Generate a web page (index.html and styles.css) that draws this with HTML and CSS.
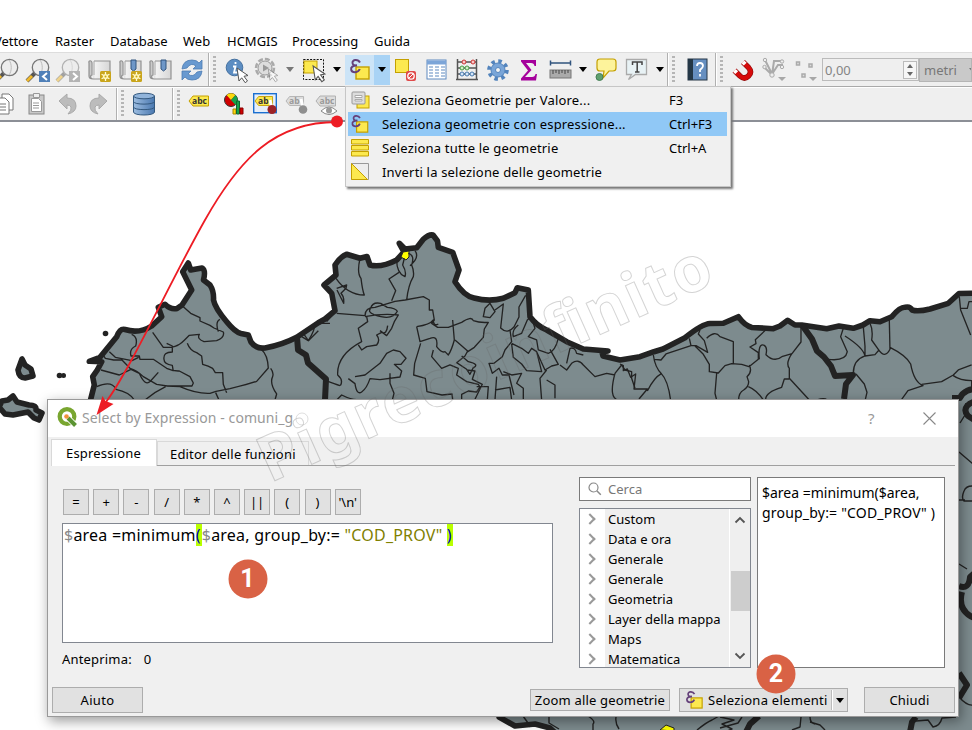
FILE: index.html
```
<!DOCTYPE html>
<html lang="it">
<head>
<meta charset="utf-8">
<title>Select by Expression - comuni_g</title>
<link rel="stylesheet" href="styles.css">
</head>
<body>
<svg width="0" height="0" class="defs">
<defs>
<linearGradient id="paper" x1="0" x2="1"><stop offset="0" stop-color="#bdbdbd"/><stop offset=".3" stop-color="#f2f2f2"/><stop offset="1" stop-color="#d6d6d6"/></linearGradient>
<linearGradient id="dbg" x1="0" x2="1"><stop offset="0" stop-color="#9dbde0"/><stop offset="1" stop-color="#4a78b0"/></linearGradient>
<symbol id="lens" viewBox="0 0 26 26" overflow="visible"><path d="M1 23l9-9" stroke="#555" stroke-width="4"/><path d="M1 23l5-5" stroke="#f0b92c" stroke-width="3"/><circle cx="14.500" cy="9.500" r="8.200" fill="#ededed" stroke="#777" stroke-width="1.300"/><path d="M14 2c3 4 3 11 0 15" fill="none" stroke="#bbb"/></symbol>
<symbol id="scroll" viewBox="0 0 26 26" overflow="visible"><path d="M6 3h16v18H5c-3 0-3-4-1-4V5c0-3-4-3-3 0v13c0 2 2 3 4 3" fill="url(#paper)" stroke="#929292" stroke-width="1.200"/><path d="M6 3v14" stroke="#aaa"/></symbol>
<symbol id="star" viewBox="0 0 11 11" overflow="visible"><rect width="11" height="11" rx="1.500" fill="#c9a51b"/><path d="M5.500 1v9M1.600 3.200l7.800 4.600M9.400 3.200l-7.800 4.600" stroke="#fffbe0" stroke-width="1.300"/><circle cx="5.500" cy="5.500" r="2.600" fill="#fff7b5"/><circle cx="5.500" cy="5.500" r="1" fill="#c9a51b"/></symbol>
<symbol id="pointer" viewBox="0 0 12 15" overflow="visible"><path d="M0 0l11 7.500-4 .8 3.500 4.700-2.300 1.700-3.500-4.900L2 13z" fill="#fff" stroke="#555" stroke-width="1"/></symbol>
<symbol id="eps" viewBox="0 0 20 21" overflow="visible"><rect x="6" y="8" width="13" height="12" fill="#fce94f" stroke="#c4a000" stroke-width="1.400"/><path d="M10 3.500C8-.2 2 .5 2.500 4c.2 2 2 2.800 4.500 2.500C3 6.500 .500 8 1.200 10.800c.7 3.200 7 3.400 8.600-.8" fill="none" stroke="#65417a" stroke-width="2"/></symbol>
<symbol id="label" viewBox="0 0 20 12" overflow="visible"><path d="M0 6l4-5h15.500v10H4z" fill="#fce94f" stroke="#c4a000"/></symbol>
<symbol id="labelg" viewBox="0 0 20 12" overflow="visible"><path d="M0 6l4-5h15.500v10H4z" fill="#ddd" stroke="#b0b0b0"/></symbol>
</defs>
</svg>

<div class="screen">
  <svg class="map" width="972" height="730" viewBox="0 0 972 730">
    <path class="coast" d="M90 402L94.300 385 92.700 376.700 97.300 370 101.700 361.700 89.300 361.300 100 357.300 116.700 336.700Q120 328 125 329.500Q139 334 151.700 326L161.700 316.700 158.300 307.300 165 304.300Q171 310 177 308.500L182 305 191.700 290 182.700 271.700 188.300 263 190.700 270 202 268Q206 270 203.500 280L210 285Q214 291 213.500 300Q215 308 226.700 321.700Q235 332 241 333.500L248.300 335 251 342Q256 349 265 348Q282 345 296.700 337.300L318.300 322.700 325 319 335 310.700 331.700 293.300 324 285 336 275 335 265Q341 256 346.700 254.300L360 258.300 367 256.500 370 265Q381 268 396.700 260L404 252 399.300 243.300 405 249 416.700 247.700 423.300 239.300Q429 234 433 235L437.500 241 438.300 247.300 452.700 252.300 459 270 455 281.700Q464 296 474 298Q489 302 503.300 298.300L515 292.700 517.300 287.700 528.300 290 530 316.700Q537 326 546.700 330L566.700 341.700 583.300 349 608 351 602 352 603 356 620 360 640 356.700 654 351.700 663 349 685 337.700Q702 324 710 323.500L723.300 323.300 738.300 316.700Q745 326 752 327.500L773.300 328.700 780 326 787.700 320.300 795 325 801.700 325 826.700 328.700 839 326 853.300 328.300 863 325 870 320.700 880 321.700 891.700 316.700Q900 307 905 307.300Q910 306 912 310Q918 312 930 309L948.300 303.300 959 293.500 980 293V740H563L550 728 535 724 515 726 499 717V402Z"/>
    <path class="coast" d="M22 359l-4 11q1 8 7 8l8-2-2-7-6-4zM2 401l6-1 5-4 4 6 12 3q8 0 7 5l6 3-3 7-5-2-6-6-15 3-8-1-6-7z"/>
    <g fill="#232323"><circle cx="105.500" cy="333.500" r="2.800"/><circle cx="59.500" cy="375.500" r="2.800"/><circle cx="63.500" cy="375.500" r="2.500"/></g>
    <path class="yel" d="M403 252l6-1v6l-3 3-5-3z"/>
    <path class="yel" d="M660 730l6-5 8 3v3z"/>
    <path class="prov" d="M297 337l1 13 8 5 2 8 18 16-1 21M802 325l10 14 5 12 7 6 7 9 4 10 18-1-7 9-2 15M982 391c-12-5-20 2-22 7h-8M982 401c-15 0-20 8-14 15l8 5M959 586q10 4 11-9l8-7M962 592q-5 18 12 26M959 673l8 12-8 13M759 716l-9 8-4 8M916 717l-4 5-2 10"/>
    <g transform="translate(0 220) scale(.3333)" class="parish">
      <path d="M550 260l22 20 28 13v10l30 13 12 8 28 12q5 16-20 26l-38 3q-22-8-14-22l-30 3-15 15q-15 15-28 18l-12 3h-23l-32-45M655 335q-10-30 5-37M500 370l17 8v18q-28 0-25 22 0 15 25 18l3 18M562 370q8 22 28 28l15 10 3 25q18 5 30 12l8 13h22l2 35 10 25M395 343q20 8 12 35-20 10-14 30h25l2 10h40l40 27q20 9 38 8l32 17 10 19-4 9h-74l-32-5-40-23q-20-20-40-25l-24-25h-25l-25-5-10-16M328 395l18 17 50 10 20-10M303 450l55 15 35-17 25 12q17 40 33 24l24-27M290 500q45-20 58 8 40 8 55 32M435 540q30-25 62-40M500 498l40 2q50 22 90 20l18-6 42-8q60-15 80-22l35-40q-2-40-20-55M812 445q10 12 6 25-10 20 12 52l-5 18M647 518l10 22M905 350l20 12q20-30 20-52h45"/>
    </g>
    <g transform="translate(300 220) scale(.3333)" class="parish">
      <path d="M180 115q-10 45 3 60 5 40 10 50-50 0-85-50M110 205l30-10-2 10-15 15q10 10 8 30l-20-40M110 280l85 7q0-25 30-25l60-18 30-4 55-10 18 10v30h10l5 30-8 10 18 12h32l40-15q30-20 35-5 20 7 45 5l-12 20-3 25-27 30-23 15M290 120q0 40 25 50 5-15-7-35l5-20M325 100q20 5 10 35 8 18 5 35-15 25-20 70M345 92q15 20-15 45M297 157l-30 20 20 35-12 30M212 265q5-20 30-15l20 12q25 2 30 12-15 30-70 10-20-8-10-19M195 290q50-10 100-5l-12 20-8 20-15 22-20-15M200 290l3 15-28 20 10 40q-75 40-72 100 18 15 8 32M175 375l10 15 15-10 30-5q12-15 0-30l15-8q15 8 18-20M10 340l15 22q20-20 30-30M80 305l20-23M0 395l20 20 5 18 55 50q25 10 40 14M110 540l15-15q30 15 48 14M165 470l30-5 45-35 20-30 20-10 20 5 18 20-15 18h-20l22 20-5 18-60 8-30-3q-10 30-25 40-15 10-20-25l-20-15M270 460v30l12 30-5 20M350 320q40-5 50-20 0 20 15 12M350 320l10 45 30-10q25-10 20 25 15 20 25 15l10 10q10-15 18-45l-5-60M362 370l-18 60-3 35 35 10 5 40 45 10 30-3 3 25M400 390l-5 20 30 35 25-10 25 10-5 20 30 20 35 8 5 8-10 15-25-3-20 10v18M465 360l38 33-8 15-25 20 30 20 10 15 10-20q20-10-15-18l-20-17M500 450l25 3-8 25 30 15-10 20-12 25M550 290l5-25 15-15 15 25-15 18zM585 270l25-18-8 72q20 20 40-3l15-30v-30l20-35M655 315q-20 15-15 35l25-10 17-40 10-8M630 330l5 35-20 25-8 20-25 20h-15l10 30 20-15 10 20h20l15 60M610 455l25 10 30-5-15 30 20 15v35M635 370l30 15 20 15 10-15 15 10 15 60-45-3-15-20-25-20-5-40M700 310l5 15-20 25 25 10 5 30 30 10q20-5 30-45M710 395l25 55 20-12 20-5-25-45M740 450l-20 25 5 65M740 480l25 15v40M780 435l20 15 15-20q20-15 35 5l35 35 35-10 25 5M800 430l10-45q15-5 20 15l20 5M945 460q-20 75 10 80M945 460l20-25 10 15 20 5v20l10 30M590 470l-5 70M585 510l45-8 5 38M530 500h35l-3 40M0 350l22-20"/>
    </g>
    <g transform="translate(620 230) scale(.3333)" class="parish">
      <path d="M0 402l10 5v15l12-5 10 25 15-10-5 45h40l-25 30M82 483q20-40 42-52 20 20 28 80M100 375q5 38 25 57M103 388l20 2 15-18 75-25h15l35 20-10-35-18-20 5-12M208 325l5 22M225 348l25 25 18 30v22l27 4 20-22 20-6 30 2 22 7 28-22v-20l-25-17 18-10-2-12 30-28M260 325q25-25 40-5l40 15v65M418 388q-5-50 15-42 10 6 5 28 25 25 50 5l28-8 27-35v-50M516 370q-20 30-8 45v30l60 65M508 447h-15l-8 25q-50 15-48 38M388 405q10 20-7 35l5 15q0 15-15 25-15 8-15 30M385 470q25 10 45 40M290 430l-5 60 5 20M670 295l-8 25 20 45q-5 30-58 23M675 318q55 35 60 60v-30l-5-57M750 280q10 20 5 50l20 28q20 30 35 0l-2-88M700 430q0-40 35-52l30-4 12-14M810 352q50 25 62 50 10 55 37 65-30 10-45 15l-20 28M905 463l60-8 35-20 15-15 40-15M1000 437q20 15 55 15v20M1018 200l4 40 30 75M1022 235h20l5-20h12M708 432l25 30 8 25-5 22M592 510q20-8 30 0"/>
    </g>
    <path class="parish" d="M960 423l5-8 1-12M959 452l14 12M972 486q-6 0-8 5-3 7 0 10h9M959 500h6M959 564l8 5M959 697q8 9 14 8M523 716l5 7 2 4M549 717v6l10 6M588 716q8 5 5 8v6M616 717q-1 6 3 12M697 730q10-8 15-10l7-4M720 717l14 3-12 4 10 5-7 3M720 728l18-5 4-6M792 730l8-3 1-10M810 717q0 6 5 7M810 722l10 3 5 5M916 721l12-1 5 7q7-1 9-9l14-1"/>
  </svg>

  <header class="menubar"><span class="m1">Vettore</span><span class="m2">Raster</span><span class="m3">Database</span><span class="m4">Web</span><span class="m5">HCMGIS</span><span class="m6">Processing</span><span class="m7">Guida</span></header>

  <div class="toolbar row1">
    <div class="group first">
      <svg class="ic"><use href="#lens" width="26" height="26" x="-1"/></svg>
      <svg class="ic"><use href="#lens" width="26" height="26" x="-1"/><rect x="12" y="13" width="11" height="11" fill="#5080b8"/><path d="M20 15l-4 3.500 4 3.500" fill="none" stroke="#fff" stroke-width="2"/></svg>
      <svg class="ic"><use href="#lens" width="26" height="26" x="-1" class="dim"/><rect x="12" y="13" width="11" height="11" fill="#b4b4b4"/><path d="M16 15l4 3.500-4 3.500" fill="none" stroke="#fff" stroke-width="2"/></svg>
      <svg class="ic"><use href="#scroll" width="26" height="26"/><use href="#star" x="12" y="13" width="11" height="11"/></svg>
      <svg class="ic"><use href="#scroll" width="26" height="26"/><path d="M12 2h5v9l-2.500 2L12 11z" fill="#6e97c8" stroke="#31547e"/><use href="#star" x="12" y="13" width="11" height="11"/></svg>
      <svg class="ic"><use href="#scroll" width="26" height="26"/><path d="M12 2h5v9l-2.500 2L12 11z" fill="#6e97c8" stroke="#31547e"/></svg>
      <svg class="ic"><path d="M2 11Q3 2 12 2q5 0 7 3l3-3v9h-9l3-3q-5-4-9 2zM22 13q-1 9-10 9-5 0-7-3l-3 3v-9h9l-3 3q5 4 9-2z" fill="#6899d0" stroke="#4b7bb3" stroke-width=".8"/></svg>
    </div>
    <i class="sep"></i><i class="grip"></i>
    <svg class="ic w30 info"><circle cx="9.500" cy="9.500" r="8.300" fill="#5c8dc2" stroke="#44709f"/><path d="M10.500 4v2M8 8.500h2.500L9 14.500h3" stroke="#fff" stroke-width="1.800" fill="none"/><use href="#pointer" x="12" y="10" width="12" height="15"/></svg>
    <svg class="ic w30"><circle cx="11" cy="10" r="9" fill="none" stroke="#aaa" stroke-width="2.500" stroke-dasharray="5 2"/><circle cx="11" cy="10" r="7" fill="#ddd" stroke="#999"/><path d="M9 6.500l6 3.500-6 3.500z" fill="#999"/><g opacity=".5"><use href="#pointer" x="14" y="11" width="11" height="13"/></g></svg>
    <b class="tri gray w18"></b>
    <svg class="ic w30"><path d="M1.500 1.500h20v20h-20z" fill="none" stroke="#111" stroke-dasharray="2 1.300"/><rect x="2" y="3" width="13" height="12" fill="#fce94f" stroke="#c4a000"/><use href="#pointer" x="11" y="8" width="13" height="16"/></svg>
    <b class="tri w16"></b>
    <div class="active"><svg class="ic w29"><use href="#eps" x="2" y="1" width="20" height="21"/></svg><b class="tri"></b></div>
    <svg class="ic w31"><rect x="1.500" y="1.500" width="13" height="13" fill="#fce94f" stroke="#c4a000"/><rect x="12" y="13" width="10" height="10" rx="2" fill="#e04a4a"/><circle cx="17" cy="18" r="3.200" fill="none" stroke="#fff" stroke-width="1.300"/><path d="M15 20l4-4" stroke="#fff"/></svg>
    <svg class="ic w31"><rect x="2" y="2" width="19" height="19" fill="#fff" stroke="#5e8ac0"/><path d="M2 4.500h19" stroke="#7ca5d8" stroke-width="4"/><path d="M4 9h4M10 9h4M16 9h4M4 12h4M10 12h4M16 12h4M4 15h4M10 15h4M16 15h4M4 18h4M10 18h4M16 18h4" stroke="#5e8ac0" stroke-width="1.200"/></svg>
    <svg class="ic w31"><path d="M2.500 1v21M21.500 1v21M1 21.500h22M3 4h18M3 10h18M3 16h18" fill="none" stroke="#555" stroke-width="1.500"/><g fill="#f8c9c9" stroke="#c33"><circle cx="9" cy="4" r="2"/><circle cx="18" cy="4" r="2"/></g><g fill="#d1eec9" stroke="#4a9a45"><circle cx="7" cy="10" r="2"/><circle cx="12" cy="10" r="2"/></g><g fill="#d4e5f8" stroke="#4679ad"><circle cx="7" cy="16" r="2"/><circle cx="12" cy="16" r="2"/><circle cx="17" cy="16" r="2"/></g></svg>
    <svg class="ic w31"><circle cx="12" cy="12" r="8.800" fill="none" stroke="#5384bd" stroke-width="4" stroke-dasharray="3.500 3.410"/><circle cx="12" cy="12" r="7" fill="#79a5d8" stroke="#5384bd"/><circle cx="12" cy="12" r="2.500" fill="#f4f4f4" stroke="#5384bd"/></svg>
    <svg class="ic w31"><path d="M4 2h15v6h-1.500Q17 5 14 5H9l5.500 7L8 19h7q3 0 3.500-3H20l-1 6.500H4v-2l7-8-7-9z" fill="#a5009b"/></svg>
    <svg class="ic w31"><path d="M2.500 5h20M2.500 2.500v5M22.500 2.500v5" stroke="#31547e" stroke-width="1.500"/><rect x="2" y="12" width="21" height="8" fill="#aaa" stroke="#777"/><path d="M5 12v4M8 12v3M11 12v4M14 12v3M17 12v4M20 12v3" stroke="#444"/></svg>
    <b class="tri w15"></b>
    <svg class="ic w31"><path d="M6 1h13q3 0 3 3v6q0 3-3 3h-4l-6 7 1-7H6q-3 0-3-3V4q0-3 3-3z" fill="#fdf39b" stroke="#c4a000" stroke-width="1.200"/><circle cx="5.500" cy="19" r="3.500" fill="#60a070" stroke="#457f55"/></svg>
    <svg class="ic w31"><path d="M2.500 1.500h20v15h-11l-7 5 3-5h-5z" fill="#e8f2f5" stroke="#aaa" stroke-width="1.300"/><path d="M8.500 7V4H18v3M13.200 4v10M11 14h4.500" fill="none" stroke="#444" stroke-width="1.500"/></svg>
    <b class="tri w15"></b>
    <i class="sep"></i><i class="grip"></i>
    <svg class="ic w36"><rect x="2" y="1" width="19" height="21" fill="#668fc0" stroke="#263746"/><path d="M2 1h5v21H2z" fill="#243746"/><path d="M11 8q0-3 3-3t3 3q0 1.500-3 4v2M14 16v2.500" stroke="#fff" stroke-width="1.800" fill="none"/></svg>
    <i class="sep sep3"></i><i class="grip"></i>
    <svg class="ic w34"><path d="M3.500 12.500l5.500 5.500q4.500 4 8.500 0t0-8.500L12 4" fill="none" stroke="#8c0a0a" stroke-width="5.500"/><path d="M3.500 12.500l5.500 5.500q4.500 4 8.500 0t0-8.500L12 4" fill="none" stroke="#d60b0b" stroke-width="4.300"/><path d="M3.300 12.300l2.400 2.400M11.800 3.800l2.400 2.400" stroke="#fff" stroke-width="4"/></svg>
    <svg class="ic w31 shift"><path d="M2 2l7 14 6-9h5M1 9l8 8 2-14h9" fill="none" stroke="#aaa" stroke-width="2"/><g fill="#eee" stroke="#aaa"><circle cx="2" cy="2" r="1.700"/><circle cx="1.500" cy="9" r="1.700"/><circle cx="19" cy="3.500" r="1.700"/><circle cx="19" cy="9" r="1.700"/><circle cx="9" cy="17" r="2.200"/></g><path d="M15 19h8l-4 4z" fill="#a7a7a7"/></svg>
    <svg class="ic w29"><g fill="#ddd" stroke="#aaa" stroke-width="1.500"><rect x="1.500" y="4" width="3" height="3"/><rect x="14" y="6" width="3" height="3"/><rect x="7" y="16" width="3" height="3"/></g><path d="M14 19h8l-4 4z" fill="#a7a7a7"/></svg>
    <div class="spin"><span>0,00</span><div class="updown"><b class="up"></b><b class="down"></b></div></div>
    <div class="unit"><span>metri</span><b class="tri gray"></b></div>
  </div>

  <div class="toolbar row2">
    <div class="group copygroup">
      <svg class="ic w31"><g fill="#fff" stroke="#777"><path d="M8 2h7l4 4v12H8z"/><path d="M2 6h9l4 4v12H2z"/></g><path d="M4 12h8M4 15h8M4 18h8" stroke="#777"/></svg>
      <svg class="ic w31"><rect x="4" y="3" width="15" height="19" fill="#c9c9c9" stroke="#888"/><path d="M6.500 6.500h7l3 3v10h-10z" fill="#fff" stroke="#999"/><path d="M8.500 1.500h6v4h-6z" fill="#eee" stroke="#999"/><path d="M8 11h6M8 13.500h6M8 16h6" stroke="#999"/></svg>
      <svg class="ic w31"><path d="M3 9l8-7v4q9 0 9 8 0 6-8 8 4-4 3-7-1-2-4-2v4z" fill="#bcbcbc" stroke="#aaa"/></svg>
      <svg class="ic w31"><path d="M21 9l-8-7v4q-9 0-9 8 0 6 8 8-4-4-3-7 1-2 4-2v4z" fill="#bcbcbc" stroke="#aaa"/></svg>
    </div>
    <i class="sep"></i><i class="grip"></i>
    <svg class="ic w46"><path d="M1.500 4v16c0 4 21 4 21 0V4" fill="url(#dbg)" stroke="#34597f"/><ellipse cx="12" cy="4" rx="10.500" ry="2.800" fill="#91b4db" stroke="#34597f"/><path d="M1.500 9.500c0 3.500 21 3.500 21 0M1.500 15c0 3.500 21 3.500 21 0" fill="none" stroke="#34597f"/></svg>
    <i class="sep"></i><i class="grip"></i>
    <svg class="ic w35"><use href="#label" x="1" y="3" width="20" height="12"/><text x="4" y="11.500" class="abc">abc</text></svg>
    <svg class="ic w31"><circle cx="8" cy="8" r="6.500" fill="#d00000" stroke="#333"/><path d="M8 8L3.500 3A7 7 0 0 1 12.500 3z" fill="#fcd80c"/><path d="M8 8l4.500-5q4 5 0 10z" fill="#16a34a"/><path d="M10 17h3v5h-3z" fill="#fcd80c" stroke="#a80"/><path d="M13.500 9h3v13h-3z" fill="#16a34a" stroke="#163"/><path d="M17 16h3v6h-3z" fill="#d00000" stroke="#800"/></svg>
    <svg class="ic w31"><rect x=".7" y="1.700" width="22.600" height="19" fill="#e7eef8" stroke="#1a6fd0" stroke-width="1.400"/><use href="#label" x="2" y="3" width="18" height="12"/><text x="5" y="12" class="abc">ab</text><path d="M17 8l2 9" stroke="#fff" stroke-width="3"/><circle cx="19" cy="17.500" r="4.500" fill="#9d2327"/></svg>
    <svg class="ic w31"><use href="#labelg" x="2" y="3" width="18" height="12"/><text x="5" y="12" class="abc g">ab</text><path d="M17 7l2 9" stroke="#fff" stroke-width="3"/><circle cx="19" cy="17.500" r="4.300" fill="#8f8f8f"/></svg>
    <svg class="ic w31"><use href="#labelg" x="1" y="3" width="20" height="12"/><text x="4.500" y="12" class="abc g">abc</text><path d="M6 19q8-8 16 0-8 7-16 0z" fill="#fff" stroke="#888"/><circle cx="14" cy="18.500" r="3" fill="#999"/></svg>
    <svg class="ic"><use href="#labelg" x="1" y="3" width="20" height="12"/></svg>
  </div>

  <div class="popup">
    <div class="item"><svg width="22" height="22"><rect x="8" y="7" width="12" height="12" fill="#fce94f" stroke="#c4a000"/><rect x="3" y="3" width="13" height="12" rx="1" fill="#ddd" stroke="#999"/><path d="M6 6.500h7v2H6zM6 10.500h7v1.500H6z" fill="#fff" stroke="#aaa"/></svg><span>Seleziona Geometrie per Valore...</span><kbd>F3</kbd></div>
    <div class="item sel"><svg width="22" height="22"><use href="#eps" x="2" y="2" width="18" height="18"/></svg><span>Seleziona geometrie con espressione...</span><kbd>Ctrl+F3</kbd></div>
    <div class="item"><svg width="22" height="22"><path d="M2.500 2.500h17v4.500h-17zM2.500 8.500h17V13h-17zM2.500 14.500h17V19h-17z" fill="#fce94f" stroke="#c4a000"/></svg><span>Seleziona tutte le geometrie</span><kbd>Ctrl+A</kbd></div>
    <div class="item"><svg width="22" height="22"><path d="M2.500 2.500h17v16h-17z" fill="#eee" stroke="#999"/><path d="M2.500 2.500v16h16z" fill="#fce94f" stroke="#c4a000"/></svg><span>Inverti la selezione delle geometrie</span></div>
  </div>

  <section class="dialog">
    <div class="title"><svg width="22" height="22" viewBox="0 0 22 22"><circle cx="10" cy="9.500" r="7.300" fill="none" stroke="#79a630" stroke-width="4.300"/><path d="M11 11l8 8" stroke="#fff" stroke-width="6"/><path d="M11 11l7.500 7.500" stroke="#5b9432" stroke-width="4"/><circle cx="9.500" cy="9.500" r="2.300" fill="#f0913b"/></svg><span class="name">Select by Expression - comuni_g</span><span class="q">?</span><svg class="x" width="13" height="13"><path d="M.5.5l12 12M12.500.5l-12 12" stroke="#888" stroke-width="1.100"/></svg></div>
    <div class="tabs"><div class="tab on"><span>Espressione</span></div><div class="tab"><span>Editor delle funzioni</span></div></div>
    <div class="panes">
      <div class="left">
        <div class="ops"><button>=</button><button>+</button><button>-</button><button>/</button><button>*</button><button>^</button><button>||</button><button>(</button><button>)</button><button>'\n'</button></div>
        <div class="editor"><span class="v">$</span>area =minimum<span class="br">(</span><span class="v">$</span>area, group_by:= <span class="col">"COD_PROV"</span> <span class="br">)</span></div>
        <div class="preview">Anteprima:<span>0</span></div>
      </div>
      <div class="mid">
        <div class="search"><svg width="14" height="14"><circle cx="5.500" cy="5.500" r="4.500" fill="none" stroke="#888" stroke-width="1.200"/><path d="M8.800 8.800l4 4" stroke="#888" stroke-width="1.500"/></svg><span>Cerca</span></div>
        <div class="tree">
          <div class="rows">
            <div><i></i><span>Custom</span></div><div><i></i><span>Data e ora</span></div><div><i></i><span>Generale</span></div><div><i></i><span>Generale</span></div><div><i></i><span>Geometria</span></div><div><i></i><span>Layer della mappa</span></div><div><i></i><span>Maps</span></div><div><i></i><span>Matematica</span></div>
          </div>
          <div class="bar"><svg width="12" height="8"><path d="M1.500 6.500L6 2l4.500 4.500" fill="none" stroke="#555" stroke-width="1.800"/></svg><b></b><svg class="end" width="12" height="8"><path d="M1.500 1.500L6 6l4.500-4.500" fill="none" stroke="#555" stroke-width="1.800"/></svg></div>
        </div>
      </div>
      <div class="help"><p class="h1">$area =minimum($area,</p><p class="h2">group_by:= "COD_PROV" )</p></div>
    </div>
    <footer>
      <button class="aiuto">Aiuto</button>
      <button class="zoomto">Zoom alle geometrie</button>
      <button class="select"><svg width="19" height="20"><use href="#eps" x="0" y="1" width="17" height="18"/></svg><span>Seleziona elementi</span><i></i><b class="tri"></b></button>
      <button class="chiudi">Chiudi</button>
    </footer>
  </section>

  <svg class="overlay" width="972" height="730" viewBox="0 0 972 730">
    <text class="mark" transform="translate(270 483) rotate(-24.200)" textLength="490">Pigrecoinfinito</text>
    <circle cx="302" cy="419" r="6" fill="none" stroke="#8884"/>
    <path d="M337 122C275 122 240 158 205 220S130 370 106 402" fill="none" stroke="#ed1c24" stroke-width="1.800"/>
    <circle cx="337" cy="121.500" r="6" fill="#ed1c24"/>
    <path d="M96.500 415l6-19 3 5 8 3z" fill="#ed1c24"/>
    <circle cx="248" cy="579" r="19.500" fill="#d96245"/><text class="num" x="247.500" y="586.500">1</text>
    <circle cx="776" cy="674" r="19.500" fill="#d96245"/><text class="num" x="776" y="681.500">2</text>
  </svg>
</div>
</body>
</html>
```
FILE: styles.css
```
* { box-sizing: border-box; }
body { margin: 0; background: #fff; font: 13px/20px "Noto Sans", "Open Sans", sans-serif; color: #000; }
.defs { position: absolute; }
.screen { position: relative; width: 972px; height: 730px; overflow: hidden; }
.map, .overlay { position: absolute; left: 0; top: 0; }
.overlay { z-index: 5; pointer-events: none; }
.coast { fill: #7d8b8e; stroke: #232323; stroke-width: 5.600; stroke-linejoin: round; }
.prov { fill: none; stroke: #232323; stroke-width: 6; stroke-linejoin: round; }
.parish { fill: none; stroke: #232323; stroke-width: 1.400; stroke-linejoin: round; }
g.parish { stroke-width: 4; }
.yel { fill: #ff0; stroke: #232323; }
.mark { font: bold 63px "Noto Sans", sans-serif; fill: none; stroke: #646464; stroke-opacity: .28; stroke-width: 1; }
.num { font: bold 25px Roboto, sans-serif; fill: #fff; text-anchor: middle; }

.menubar { position: relative; display: flex; height: 52px; padding-top: 31px; }
.menubar span { flex: none; white-space: nowrap; }
.m1 { width: 61px; margin-left: -6px; letter-spacing: -.05px; }
.m2 { width: 55px; }
.m3 { width: 73px; }
.m4 { width: 44px; }
.m5 { width: 65px; }
.m6 { width: 82px; }

.toolbar { position: relative; display: flex; align-items: center; background: #efefef; overflow: hidden; }
.row1 { height: 35px; border-top: 1px solid #ddd; border-bottom: 1px solid #aaa; }
.row2 { height: 35px; border-top: 1px solid #fff; border-bottom: 2px solid #8c8f96; padding-bottom: 1px; }
.group { display: flex; flex: none; }
.first { margin-left: -7px; }
.copygroup { margin-left: -9px; width: 125px; }
.ic { flex: none; width: 30.700px; height: 24px; padding-left: 3px; overflow: visible; }
.w15 { width: 15px; }
.w16 { width: 16px; }
.w18 { width: 18px; }
.w29 { width: 29px; }
.w30 { width: 30px; }
.info { padding-left: 4px; }
.w31 { width: 30.800px; }
.w34 { width: 33px; }
.w35 { width: 34.500px; }
.w36 { width: 37px; padding-left: 6px; }
.w46 { width: 43px; padding-left: 3px; }
.shift { padding-left: 2px; }
.dim { opacity: .5; }
.sep { flex: none; width: 2px; height: 34px; background: #b0b0b0; border-right: 1px solid #fff; }
.sep3 { margin-left: -2px; }
.grip { flex: none; width: 3px; height: 27px; margin: 0 5px 0 3px; background: repeating-linear-gradient(#b5b5b5 0 2px, transparent 2px 4px); }
.tri { display: flex; flex: none; justify-content: center; align-items: center; }
.tri::before { content: ""; border: 4.500px solid transparent; border-top: 5px solid #000; border-bottom: 0; }
.tri.gray::before { border-top-color: #777; }
.active { display: flex; align-items: center; flex: none; width: 45px; height: 30px; margin: 0 1px 0 0; background: #cce4f7; }
.active .tri { width: 16px; height: 30px; background: #a9d3f5; }
.spin { display: flex; flex: none; width: 97px; height: 23px; border: 1px solid #bbb; color: #858585; padding: 0 1px 0 2px; align-items: center; justify-content: space-between; margin-left: auto; }
.updown { width: 14px; height: 18px; border: 1px solid #bbb; background: #f6f6f6; display: flex; flex-direction: column; justify-content: space-around; align-items: center; }
.up, .down { border: 3.500px solid transparent; }
.up { border-top: 0; border-bottom: 4px solid #666; }
.down { border-bottom: 0; border-top: 4px solid #666; }
.unit { display: flex; flex: none; justify-content: space-between; width: 53px; height: 24px; background: #c9c9c9; border: 1px solid #b5b5b5; color: #777; padding: 1px 0 0 4px; overflow: hidden; }
.unit .tri { margin-right: -6px; }
.abc { font: bold 8.500px "Open Sans", sans-serif; fill: #333; }
.abc.g { fill: #999; }

.popup { position: absolute; z-index: 3; left: 345px; top: 86px; width: 386px; height: 101px; padding: 1px 3px 0 2px; background: #f0f0f0; border: 1px solid #c6c6c6; box-shadow: 2px 2px 2px #777; letter-spacing: .18px; }
.item { display: flex; align-items: center; height: 24px; padding-left: 1px; white-space: nowrap; }
.item svg, .item span { flex: none; }
.item span { width: 298px; padding-left: 11px; }
.item kbd { font: inherit; letter-spacing: 0; }
.item.sel { background: #90c8f6; }

.dialog { position: absolute; z-index: 2; left: 47px; top: 399px; width: 912px; height: 318px; background: #f0f0f0; border: 1px solid #999; box-shadow: 2px 4px 12px #0006; letter-spacing: .18px; }
.title { height: 37px; background: #fff; display: flex; align-items: center; padding: 0 0 1px 9px; color: #999; font-size: 14px; letter-spacing: .08px; }
.name { margin-left: 3px; width: 786px; }
.title .q { width: 55px; font-size: 15px; }
.tabs { display: flex; align-items: flex-end; height: 29px; margin: 0 3px; border-bottom: 1px solid #a0a0a0; }
.tab { height: 24px; width: 152px; border: 1px solid #d9d9d9; border-bottom: 0; padding: 2px 0 0 12px; white-space: nowrap; }
.tab.on { width: 106px; height: 27px; padding: 3px 0 0 14px; margin-bottom: -1px; background: #fff; }
.panes { display: flex; height: 218px; padding: 11px 13px 0 14px; }
.left { width: 491px; margin-right: 26px; padding-top: 12px; }
.ops { display: flex; gap: 4.200px; margin-left: 1px; }
button { font: inherit; letter-spacing: inherit; color: #000; background: #e1e1e1; border: 1px solid #adadad; padding: 0; white-space: nowrap; }
.ops button { width: 26px; height: 26px; letter-spacing: 0; }
.editor { height: 120px; margin-top: 8px; border: 1px solid #828790; background: #fff; padding-left: 1px; font-size: 16px; line-height: 22px; white-space: pre; letter-spacing: .22px; }
.v { color: #888; }
.br { background: #b9ff00; color: #0000c8; padding-right: 1px; }
.col { color: #808000; }
.preview { margin-top: 6px; }
.preview span { margin-left: 12px; }
.mid { width: 172px; margin-right: 6px; }
.search { height: 24px; background: #fff; border: 1px solid #7a7a7a; display: flex; align-items: center; padding-left: 8px; color: #777; letter-spacing: 0; }
.search span { margin-left: 6px; }
.tree { height: 160px; margin-top: 7px; border: 1px solid #828790; display: flex; background: #efefef; overflow: hidden; letter-spacing: .02px; }
.rows { width: 149px; background: linear-gradient(90deg, #fff 25px, #efefef 25px); }
.rows div { display: flex; align-items: center; height: 20px; white-space: nowrap; }
.rows i { width: 8px; height: 8px; margin: 0 13px 0 6px; border: solid #999; border-width: 2px 2px 0 0; transform: rotate(45deg); flex: none; }
.rows span { padding-left: 1px; }
.bar { flex: 1; border-left: 1px solid #fff; display: flex; flex-direction: column; align-items: center; padding: 7px 0; }
.bar b { width: 19px; height: 40px; background: #cdcdcd; margin-top: 47px; }
.end { margin-top: auto; }
.help { width: 188px; height: 191px; background: #fff; border: 1px solid #7a7a7a; padding: 5px 4px; font-size: 14px; letter-spacing: 0; }
.help p { margin: 0; white-space: nowrap; }
.h2 { letter-spacing: .2px; }
footer { display: flex; align-items: center; height: 28px; padding: 0 3px 0 4px; margin-top: 2px; }
.aiuto { width: 91px; height: 26px; letter-spacing: .3px; }
.zoomto { width: 140px; height: 22px; margin-left: 387px; }
.select { display: flex; align-items: center; width: 169px; height: 24px; margin: 0 16px 0 9px; padding-left: 6px; letter-spacing: .28px; }
.select span { width: 126px; text-align: left; padding-left: 3px; }
.select i { width: 2px; height: 20px; background: #bbb; border-right: 1px solid #fff; }
.select .tri { width: 14px; }
.chiudi { width: 91px; height: 26px; }
```
